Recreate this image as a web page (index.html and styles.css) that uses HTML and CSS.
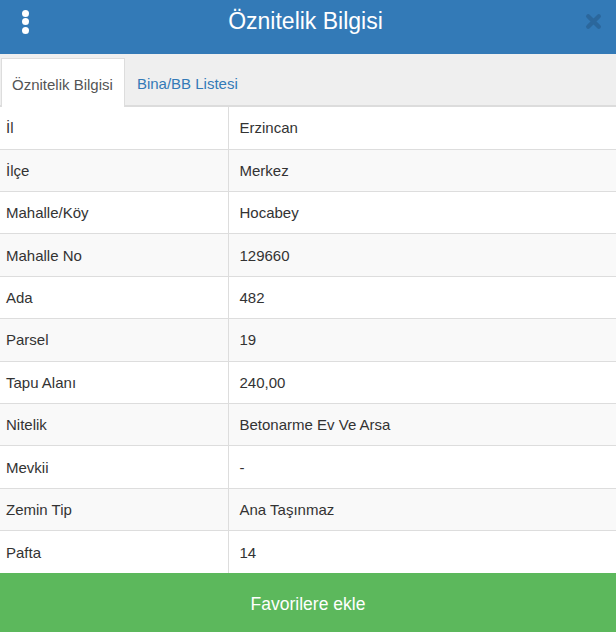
FILE: index.html
```html
<!DOCTYPE html>
<html lang="tr">
<head>
  <meta charset="UTF-8" />
  <meta name="viewport" content="width=device-width, initial-scale=1.0"/>
  <title>Öznitelik Bilgisi</title>
  <link rel="stylesheet" href="styles.css">
</head>
<body>

<div class="panel">
  <!-- Header -->
  <div class="panel-header">
    <button class="menu-btn" aria-label="Menü">
      <span></span><span></span><span></span>
    </button>
    <h1>Öznitelik Bilgisi</h1>
    <button class="close-btn" aria-label="Kapat">
      <svg width="17" height="17" viewBox="0 0 16 16">
        <path d="M3 3 L13 13 M13 3 L3 13" stroke="#2b679c" stroke-width="4" stroke-linecap="round"/>
      </svg>
    </button>
  </div>

  <!-- Tabs -->
  <ul class="tabs">
    <li class="tab active">Öznitelik Bilgisi</li>
    <li class="tab">Bina/BB Listesi</li>
  </ul>

  <!-- Attribute table -->
  <table class="attr-table">
    <tr><td>İl</td><td>Erzincan</td></tr>
    <tr><td>İlçe</td><td>Merkez</td></tr>
    <tr><td>Mahalle/Köy</td><td>Hocabey</td></tr>
    <tr><td>Mahalle No</td><td>129660</td></tr>
    <tr><td>Ada</td><td>482</td></tr>
    <tr><td>Parsel</td><td>19</td></tr>
    <tr><td>Tapu Alanı</td><td>240,00</td></tr>
    <tr><td>Nitelik</td><td>Betonarme Ev Ve Arsa</td></tr>
    <tr><td>Mevkii</td><td>-</td></tr>
    <tr><td>Zemin Tip</td><td>Ana Taşınmaz</td></tr>
    <tr><td>Pafta</td><td>14</td></tr>
  </table>

  <button class="fav-btn">Favorilere ekle</button>
</div>

</body>
</html>
```

FILE: styles.css
```css
* {
  margin: 0;
  padding: 0;
  box-sizing: border-box;
  font-family: "Liberation Sans", Arial, sans-serif;
}

body {
  background: #fff;
  color: #333;
  overflow: hidden;
}

.panel {
  display: flex;
  flex-direction: column;
  height: 632px;
}

.panel-header {
  height: 54px;
  background: #337ab7;
  display: flex;
  align-items: center;
  justify-content: space-between;
  padding: 0 14px 0 18px;
}

.panel-header h1 {
  color: #fff;
  font-size: 23px;
  font-weight: normal;
  margin-top: -10px;
  margin-left: -6px;
}

.menu-btn, .close-btn {
  background: none;
  border: none;
  cursor: pointer;
  display: flex;
}

.menu-btn {
  flex-direction: column;
  gap: 1.5px;
  width: 14px;
  align-items: center;
  margin-top: -10px;
}

.menu-btn span {
  width: 7px;
  height: 7px;
  border-radius: 50%;
  background: #fff;
}

.close-btn {
  margin-top: -11px;
}

.tabs {
  list-style: none;
  display: flex;
  background: #efefef;
  padding: 4px 0 0 1px;
  border-bottom: 2px solid #dcdcdc;
  height: 53px;
}

.tab {
  font-size: 15px;
  padding: 17px 12px 0 12px;
  color: #337ab7;
  white-space: nowrap;
  cursor: pointer;
}

.tab.active {
  background: #fff;
  color: #555;
  border: 1px solid #ddd;
  border-bottom: none;
  margin-bottom: -2px;
  padding-left: 10px;
  padding-right: 11px;
}

.attr-table {
  width: 100%;
  border-collapse: collapse;
  font-size: 15px;
  flex: 1;
}

.attr-table td {
  height: 42.4px;
  border-bottom: 1px solid #ddd;
  padding: 0 6px;
  vertical-align: middle;
}

.attr-table td:first-child {
  width: 228px;
  border-right: 1px solid #ddd;
}

.attr-table td:last-child {
  padding-left: 11px;
}

.attr-table tr:nth-child(even) td {
  background: #f9f9f9;
}

.attr-table tr:last-child td {
  border-bottom: none;
}

.fav-btn {
  height: 59px;
  background: #5cb85c;
  color: #fff;
  border: none;
  font-size: 17.5px;
  padding-top: 3px;
  cursor: pointer;
  width: 100%;
}
```
